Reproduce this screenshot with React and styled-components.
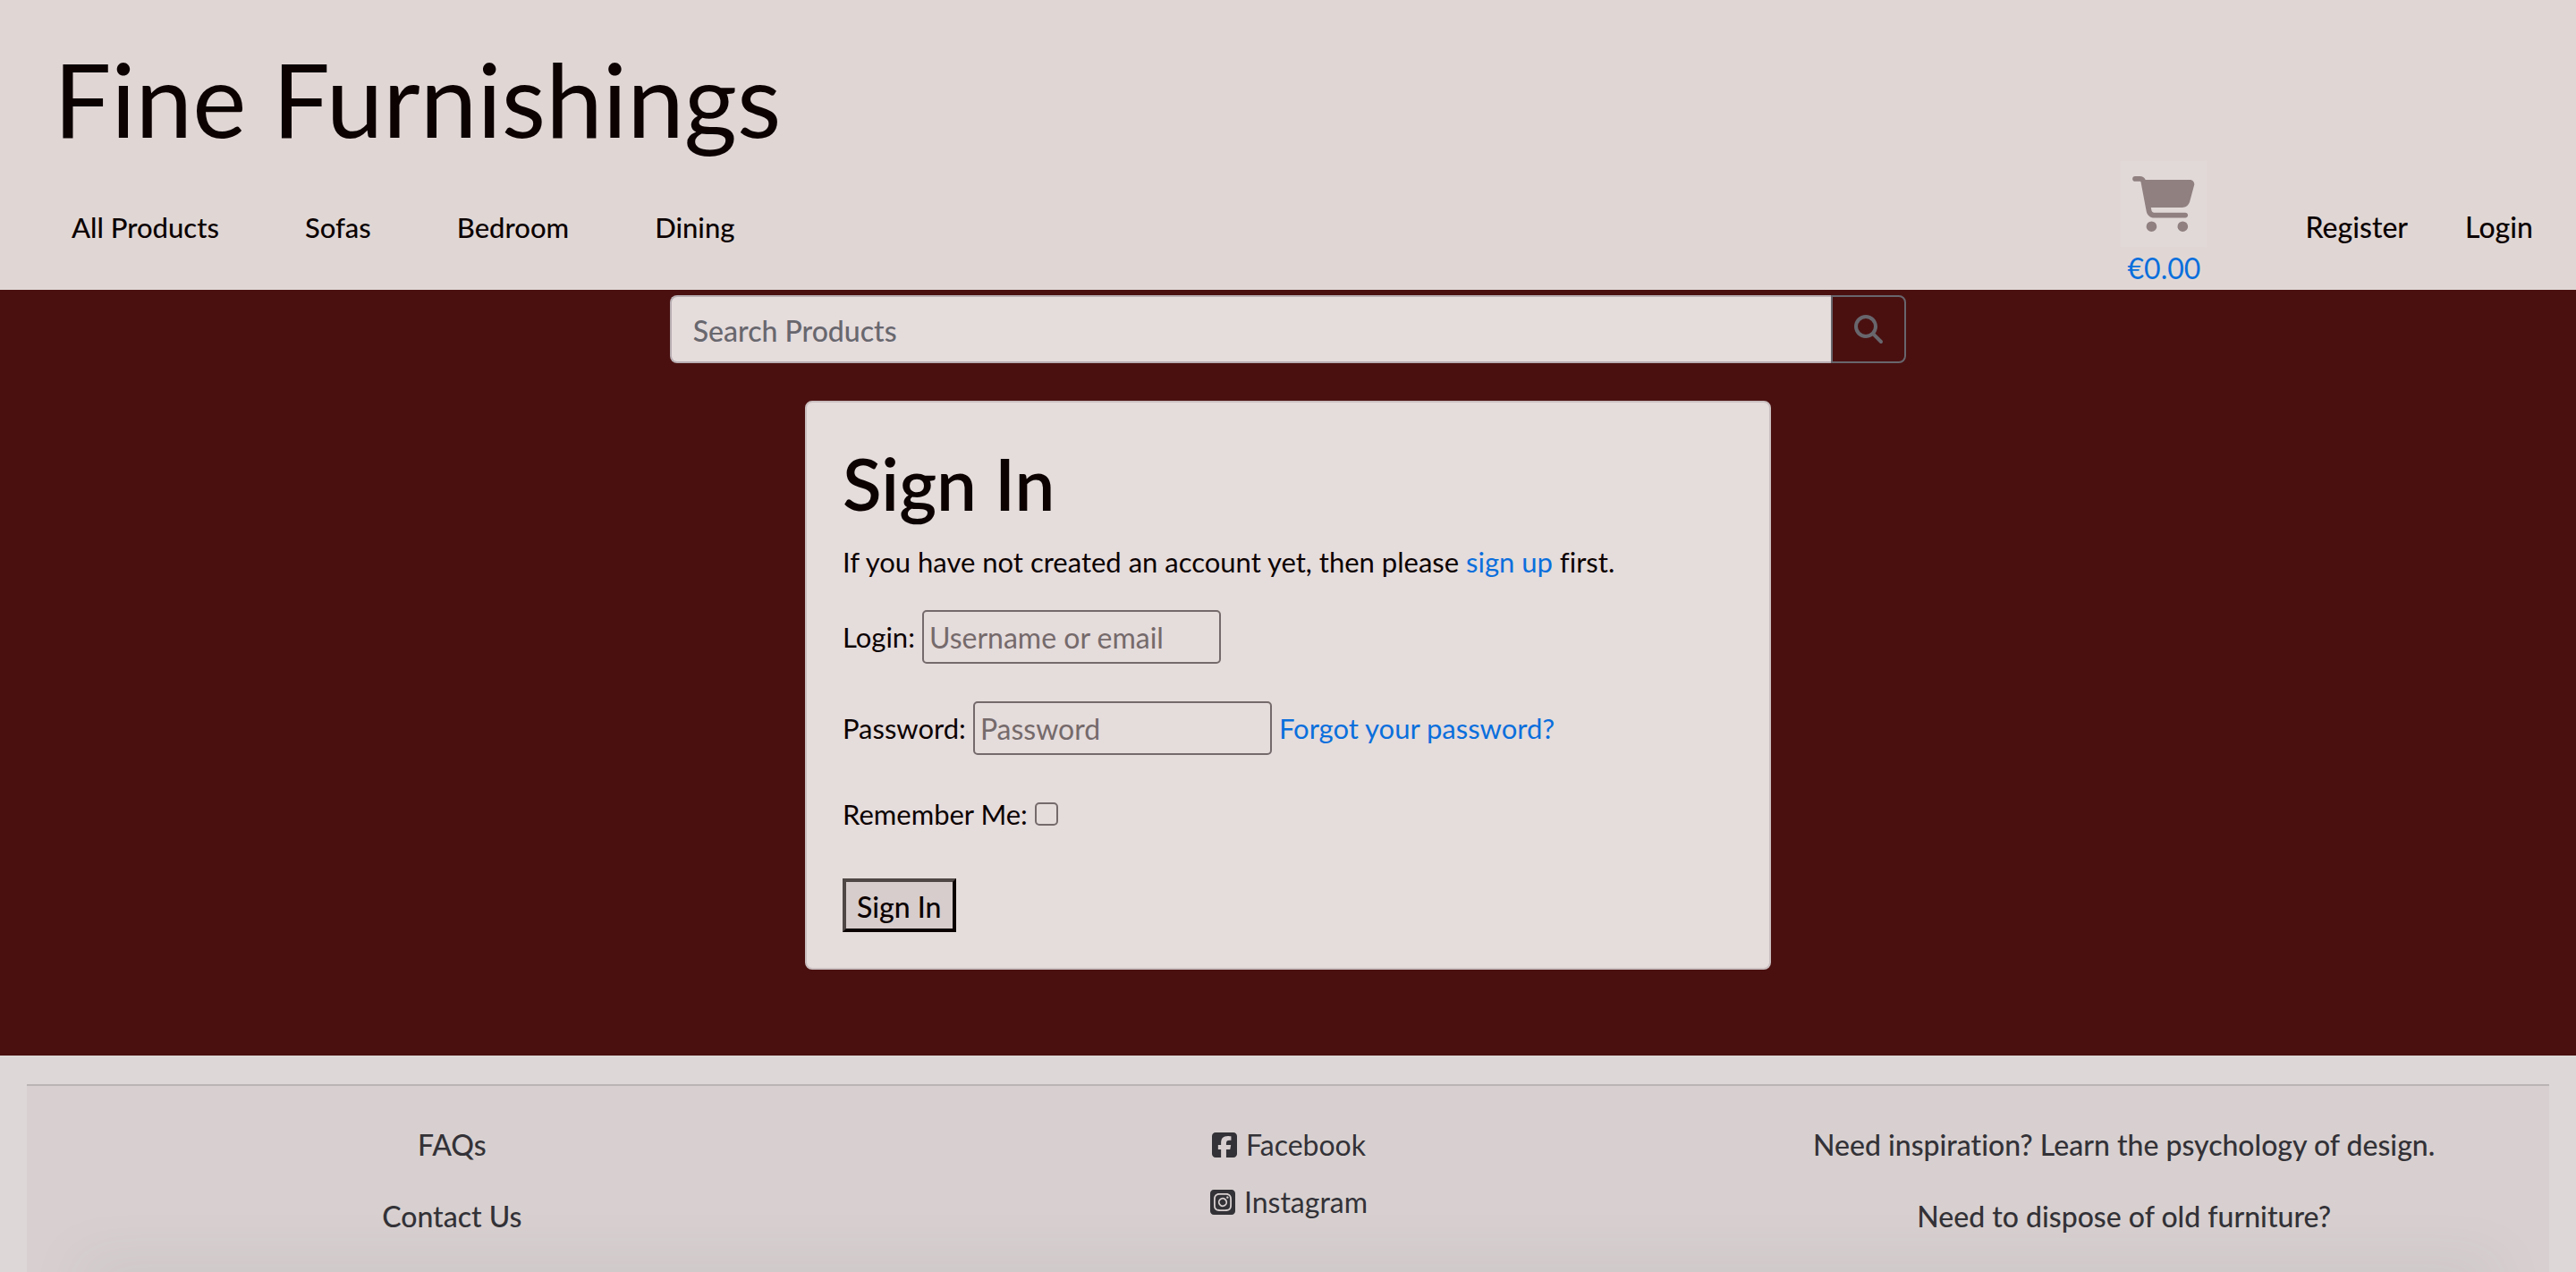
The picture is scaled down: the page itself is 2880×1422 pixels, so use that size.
import React from "react";
import styled, { createGlobalStyle } from "styled-components";
import {
  FaCartShopping,
  FaMagnifyingGlass,
  FaSquareFacebook,
  FaSquareInstagram,
} from "react-icons/fa6";

const GlobalStyle = createGlobalStyle`
  *, *::before, *::after { box-sizing: border-box; }
  body {
    margin: 0;
    background: #4a1010;
    color: #0c0202;
    font-family: Lato, "Open Sans", sans-serif;
    font-size: 32px;
    font-variant-ligatures: none;
    line-height: 48px;
  }
  a { color: #0a6fdc; text-decoration: none; }
  input, button { font: inherit; color: inherit; }
`;

const Page = styled.div`
  display: flex;
  flex-direction: column;
  min-height: 100vh;
`;

const Header = styled.header`
  background: #e0d7d5;
  padding: 40px 48px 0 60px;
`;

const Brand = styled.a`
  && { color: #0c0202; }
  display: block;
  width: fit-content;
  font-size: 114px;
  line-height: 140px;
`;

const NavBar = styled.nav`
  display: flex;
  justify-content: space-between;
  align-items: flex-start;
`;

const NavList = styled.ul`
  display: flex;
  gap: ${(p) => p.$gap}px;
  margin: 0;
  padding: ${(p) => (p.$inset ? "50px 0 0 20px" : "50px 0 0")};
  list-style: none;
  font-size: ${(p) => (p.$inset ? 31 : 32)}px;
`;

const NavLink = styled.a`
  && { color: #0c0202; }
  font-weight: 500;
`;

const Account = styled.div`
  display: flex;
  gap: 110px;
`;

const CartLink = styled.a`
  display: flex;
  flex-direction: column;
  align-items: center;
`;

const CartPicture = styled.span`
  display: grid;
  place-items: center;
  width: 96px;
  height: 96px;
  background: #e1d9d8;
  color: #908080;
  svg { width: 70px; height: 62px; }
`;

const Main = styled.main`
  padding: 6px 0 96px;
`;

const Search = styled.form`
  display: flex;
  width: 48%;
  height: 76px;
  margin: 0 auto 42px;
`;

const SearchInput = styled.input`
  flex: 1;
  min-width: 0;
  padding: 4px 24px 0;
  border: 2px solid #b9afb3;
  border-right: 0;
  border-radius: 8px 0 0 8px;
  background: #e5dcdc;
  outline: none;
  font-weight: 500;
  &::placeholder { color: #68676e; opacity: 1; }
`;

const SearchButton = styled.button`
  display: grid;
  place-items: center;
  width: 84px;
  border: 2px solid #68666d;
  border-radius: 0 8px 8px 0;
  background: transparent;
  color: #68666d;
`;

const Card = styled.section`
  width: 37.5%;
  margin: 0 auto;
  padding: 40px;
  border: 2px solid #cabfc0;
  border-radius: 8px;
  background: #e5dcdc;
  font-size: 31px;
`;

const Title = styled.h1`
  margin: 2px 0 16px;
  font-size: 80px;
  font-weight: 600;
  line-height: 96px;
`;

const Intro = styled.p`
  margin: 0 0 30px;
`;

const Field = styled.div`
  display: flex;
  align-items: center;
  gap: 8px;
  height: 60px;
  margin-bottom: ${(p) => p.$space}px;
`;

const TextInput = styled.input`
  width: 334px;
  height: 60px;
  padding: 2px 6px;
  border: 2px solid #756a6b;
  border-radius: 5px;
  background: transparent;
  font-size: 32px;
  &::placeholder { color: #756a6b; opacity: 1; }
`;

const Checkbox = styled.input`
  appearance: none;
  width: 26px;
  height: 26px;
  margin: 0;
  border: 2px solid #756a6b;
  border-radius: 5px;
  background: transparent;
`;

const SubmitButton = styled.button`
  display: block;
  height: 60px;
  padding: 4px 12px 0;
  border: 4px solid;
  border-color: #4f4646 #0c0202 #0c0202 #4f4646;
  background: #d7cdcc;
  font-size: 32px;
  line-height: 44px;
  font-weight: 500;
`;

const Footer = styled.footer`
  position: relative;
  flex: 1;
  display: flex;
  padding: 32px 30px 0;
  overflow: hidden;
  background: #ddd8d7;
  &::after {
    content: "";
    position: absolute;
    right: 100px;
    bottom: -20px;
    left: 100px;
    height: 20px;
    box-shadow: 0 0 60px 6px rgba(120, 125, 125, 0.18);
  }
`;

const FooterColumns = styled.div`
  flex: 1;
  display: grid;
  grid-template-columns: repeat(3, 1fr);
  padding: 42px 8px 0;
  border-top: 2px solid #bbb4b4;
  background: #d8d0d0;
`;

const FooterColumn = styled.div`
  display: flex;
  flex-direction: column;
  align-items: center;
  gap: ${(p) => p.$gap}px;
`;

const FooterLink = styled.a`
  && { color: #333237; }
  display: flex;
  align-items: center;
  gap: 8px;
  font-weight: ${(p) => (p.$light ? 400 : 500)};
`;

export default function App() {
  return (
    <>
      <GlobalStyle />
      <Page>
        <Header>
          <Brand href="#">Fine Furnishings</Brand>
          <NavBar>
            <NavList $gap={96} $inset>
              {["All Products", "Sofas", "Bedroom", "Dining"].map((name) => (
                <li key={name}><NavLink href="#">{name}</NavLink></li>
              ))}
            </NavList>
            <Account>
              <CartLink href="#">
                <CartPicture><FaCartShopping aria-hidden="true" /></CartPicture>
                <span>€0.00</span>
              </CartLink>
              <NavList $gap={64}>
                <li><NavLink href="#">Register</NavLink></li>
                <li><NavLink href="#">Login</NavLink></li>
              </NavList>
            </Account>
          </NavBar>
        </Header>
        <Main>
          <Search role="search">
            <SearchInput type="search" aria-label="Search Products" placeholder="Search Products" />
            <SearchButton type="button" aria-label="Search"><FaMagnifyingGlass /></SearchButton>
          </Search>
          <Card>
            <Title>Sign In</Title>
            <Intro>
              If you have not created an account yet, then please <a href="#">sign up</a> first.
            </Intro>
            <form>
              <Field $space={42}>
                <label htmlFor="login">Login:</label>
                <TextInput id="login" type="text" placeholder="Username or email" />
              </Field>
              <Field $space={36}>
                <label htmlFor="password">Password:</label>
                <TextInput id="password" type="password" placeholder="Password" />
                <a href="#">Forgot your password?</a>
              </Field>
              <Field $space={42}>
                <label htmlFor="remember">Remember Me:</label>
                <Checkbox id="remember" type="checkbox" />
              </Field>
              <SubmitButton type="button">Sign In</SubmitButton>
            </form>
          </Card>
        </Main>
        <Footer>
          <FooterColumns>
            <FooterColumn $gap={32}>
              <FooterLink href="#">FAQs</FooterLink>
              <FooterLink href="#">Contact Us</FooterLink>
            </FooterColumn>
            <FooterColumn $gap={16}>
              <FooterLink href="#" $light><FaSquareFacebook aria-hidden="true" />Facebook</FooterLink>
              <FooterLink href="#" $light><FaSquareInstagram aria-hidden="true" />Instagram</FooterLink>
            </FooterColumn>
            <FooterColumn $gap={32}>
              <FooterLink href="#">Need inspiration? Learn the psychology of design.</FooterLink>
              <FooterLink href="#">Need to dispose of old furniture?</FooterLink>
            </FooterColumn>
          </FooterColumns>
        </Footer>
      </Page>
    </>
  );
}
